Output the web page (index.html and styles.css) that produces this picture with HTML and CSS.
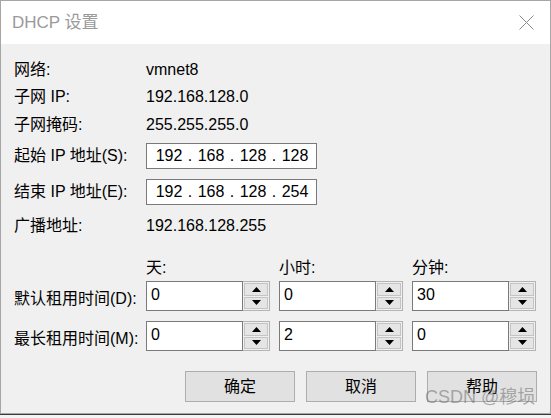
FILE: index.html
```
<!DOCTYPE html>
<html lang="zh-CN">
<head>
<meta charset="utf-8">
<title>DHCP 设置</title>
<link rel="stylesheet" href="styles.css">
</head>
<body>
<div class="window">
  <div class="titlebar">
    <span class="title">DHCP 设置</span>
    <svg class="close" width="15" height="15" viewBox="0 0 15 15"><path d="M0.5 0.5 L14.5 14.5 M14.5 0.5 L0.5 14.5" stroke="#8a8a8a" stroke-width="1" fill="none"/></svg>
  </div>
  <div class="content">
    <div class="row h27"><span class="lbl">网络:</span><span class="val">vmnet8</span></div>
    <div class="row h28"><span class="lbl">子网 IP:</span><span class="val">192.168.128.0</span></div>
    <div class="row h27"><span class="lbl">子网掩码:</span><span class="val">255.255.255.0</span></div>

    <div class="row iprow first"><span class="lbl">起始 IP 地址(S):</span>
      <div class="ipbox"><span class="oct">192</span><span class="dot">.</span><span class="oct">168</span><span class="dot">.</span><span class="oct">128</span><span class="dot">.</span><span class="oct">128</span></div>
    </div>
    <div class="row iprow second"><span class="lbl">结束 IP 地址(E):</span>
      <div class="ipbox"><span class="oct">192</span><span class="dot">.</span><span class="oct">168</span><span class="dot">.</span><span class="oct">128</span><span class="dot">.</span><span class="oct">254</span></div>
    </div>
    <div class="row h27 bcast"><span class="lbl">广播地址:</span><span class="val">192.168.128.255</span></div>

    <div class="lease-head">
      <span class="lbl"></span>
      <span class="colh">天:</span>
      <span class="colh">小时:</span>
      <span class="colh">分钟:</span>
    </div>
    <div class="lease-row r1">
      <span class="lbl lease-lbl">默认租用时间(D):</span>
      <div class="spinner"><div class="spin-input">0</div><div class="spin"><div class="sbtn"><svg width="9" height="5" viewBox="0 0 9 5"><polygon points="4.5,0 9,5 0,5" fill="#000"/></svg></div><div class="sbtn"><svg width="9" height="5" viewBox="0 0 9 5"><polygon points="0,0 9,0 4.5,5" fill="#000"/></svg></div></div></div>
      <div class="spinner"><div class="spin-input">0</div><div class="spin"><div class="sbtn"><svg width="9" height="5" viewBox="0 0 9 5"><polygon points="4.5,0 9,5 0,5" fill="#000"/></svg></div><div class="sbtn"><svg width="9" height="5" viewBox="0 0 9 5"><polygon points="0,0 9,0 4.5,5" fill="#000"/></svg></div></div></div>
      <div class="spinner"><div class="spin-input">30</div><div class="spin"><div class="sbtn"><svg width="9" height="5" viewBox="0 0 9 5"><polygon points="4.5,0 9,5 0,5" fill="#000"/></svg></div><div class="sbtn"><svg width="9" height="5" viewBox="0 0 9 5"><polygon points="0,0 9,0 4.5,5" fill="#000"/></svg></div></div></div>
    </div>
    <div class="lease-row r2">
      <span class="lbl lease-lbl">最长租用时间(M):</span>
      <div class="spinner"><div class="spin-input">0</div><div class="spin"><div class="sbtn"><svg width="9" height="5" viewBox="0 0 9 5"><polygon points="4.5,0 9,5 0,5" fill="#000"/></svg></div><div class="sbtn"><svg width="9" height="5" viewBox="0 0 9 5"><polygon points="0,0 9,0 4.5,5" fill="#000"/></svg></div></div></div>
      <div class="spinner"><div class="spin-input">2</div><div class="spin"><div class="sbtn"><svg width="9" height="5" viewBox="0 0 9 5"><polygon points="4.5,0 9,5 0,5" fill="#000"/></svg></div><div class="sbtn"><svg width="9" height="5" viewBox="0 0 9 5"><polygon points="0,0 9,0 4.5,5" fill="#000"/></svg></div></div></div>
      <div class="spinner"><div class="spin-input">0</div><div class="spin"><div class="sbtn"><svg width="9" height="5" viewBox="0 0 9 5"><polygon points="4.5,0 9,5 0,5" fill="#000"/></svg></div><div class="sbtn"><svg width="9" height="5" viewBox="0 0 9 5"><polygon points="0,0 9,0 4.5,5" fill="#000"/></svg></div></div></div>
    </div>

    <div class="buttons">
      <button class="btn">确定</button>
      <button class="btn">取消</button>
      <button class="btn">帮助</button>
    </div>
  </div>
  <div class="watermark">CSDN @穆埙</div>
</div>
<div class="below"></div>
</body>
</html>
```
FILE: styles.css
```
* { box-sizing: border-box; }
html, body { margin: 0; padding: 0; }
body {
  width: 551px;
  height: 418px;
  overflow: hidden;
  background: #ffffff;
  font-family: "Liberation Sans", "Noto Sans CJK SC", sans-serif;
  font-size: 16px;
  color: #000;
}
.window {
  position: relative;
  width: 551px;
  height: 414px;
  border: 1px solid #a6a6a6;
  background: #f0f0f0;
  display: flex;
  flex-direction: column;
}
.titlebar {
  height: 43px;
  background: #ffffff;
  display: flex;
  align-items: center;
  justify-content: space-between;
  padding: 0 16px 0 11px;
}
.title {
  font-size: 17px;
  color: #9a9a9a;
  line-height: 20px;
}
.close { display: block; margin-top: -1px; }
.content {
  padding: 12px 13px 0 13px;
  display: flex;
  flex-direction: column;
}
.row {
  display: flex;
  align-items: center;
  line-height: 20px;
}
.h27 { height: 27px; }
.h28 { height: 28px; }
.lbl {
  width: 132px;
  flex: none;
  white-space: nowrap;
}
.val { white-space: nowrap; }
.iprow { height: 26px; }
.iprow.first { margin-top: 5px; }
.iprow.second { margin-top: 10px; }
.bcast { margin-top: 7px; }
.ipbox {
  width: 171px;
  height: 26px;
  border: 1px solid #7a7a7a;
  background: #fff;
  display: flex;
  align-items: center;
  padding-left: 5px;
}
.oct { width: 34px; text-align: center; }
.dot { width: 8px; text-align: center; }

.lease-head,
.lease-row {
  display: grid;
  grid-template-columns: 132px 133px 133px 124px;
  align-items: center;
  line-height: 20px;
}
.lease-head {
  margin-top: 18px;
  height: 21px;
}
.lease-head .lbl,
.lease-row .lbl { width: auto; }
.lease-row { height: 30px; }
.lease-lbl { padding-top: 5px; }
.lease-row.r1 { margin-top: 3px; }
.lease-row.r2 { margin-top: 10px; }
.spinner {
  display: flex;
  width: 124px;
  height: 30px;
}
.spin-input {
  width: 97px;
  height: 30px;
  border: 1px solid #7a7a7a;
  background: #fff;
  padding: 2px 0 0 4px;
  line-height: 22px;
}
.spin {
  width: 27px;
  height: 30px;
  border: 1px solid #b4b4b4;
  border-left: none;
  background: #f0f0f0;
  padding: 1px;
  display: flex;
  flex-direction: column;
  gap: 1px;
}
.sbtn {
  flex: 1;
  border: 1px solid #c4c4c4;
  background: #e5e5e5;
  display: flex;
  align-items: center;
  justify-content: center;
}
.sbtn svg { display: block; }

.buttons {
  margin-top: 20px;
  display: flex;
  justify-content: flex-end;
  gap: 11px;
}
.btn {
  width: 110px;
  height: 31px;
  border: 1px solid #adadad;
  background: #e1e1e1;
  font-family: "Liberation Sans", "Noto Sans CJK SC", sans-serif;
  font-size: 16px;
  color: #000;
  padding: 0;
  line-height: 20px;
}
.watermark {
  position: absolute;
  left: 424px;
  top: 387px;
  font-size: 18px;
  line-height: 18px;
  color: rgba(110, 110, 110, 0.55);
  white-space: nowrap;
}
.below {
  height: 4px;
  border-top: 1px solid #3a3a3a;
  background: #f4f4f4;
}
```
